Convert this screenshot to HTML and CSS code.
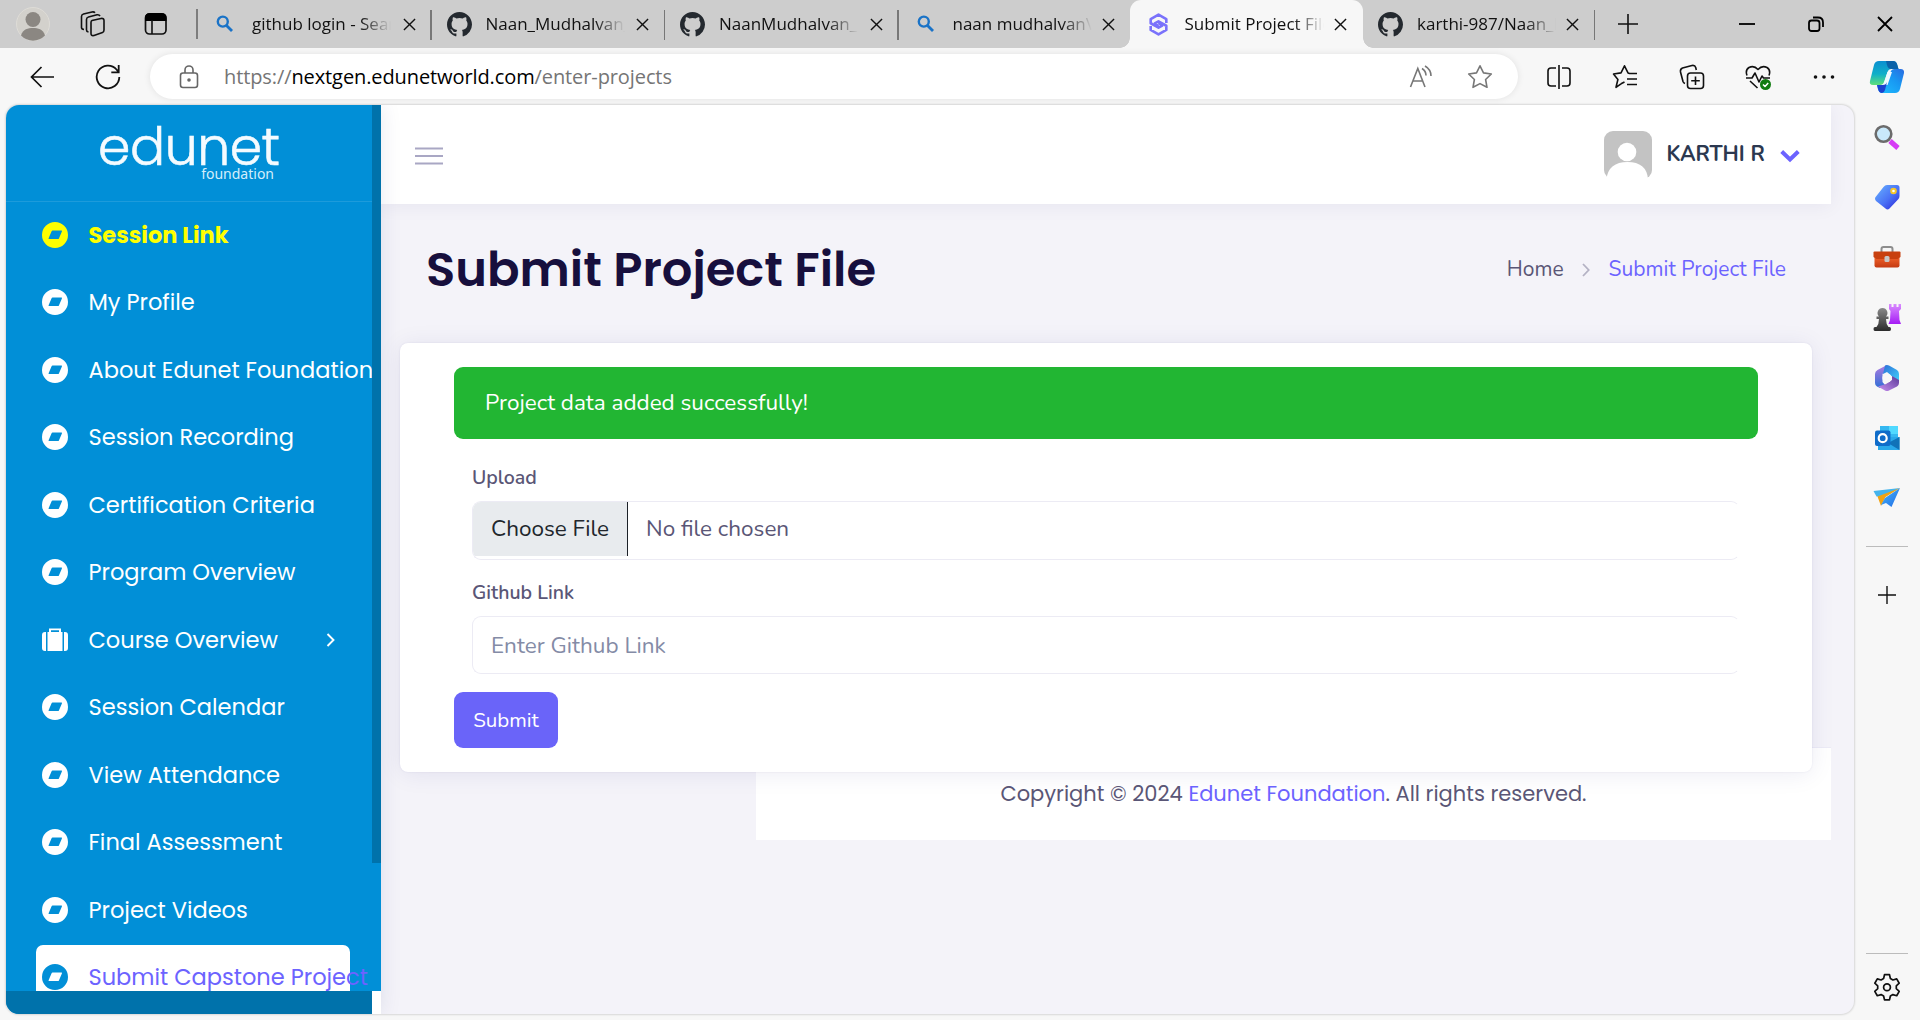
FILE: index.html
```html
<!DOCTYPE html>
<html lang="en">
<head>
<meta charset="utf-8">
<title>Submit Project File</title>
<link rel="stylesheet" href="styles.css">
</head>
<body>
<svg width="0" height="0" class="defs">
  <defs>
    <linearGradient id="copA" x1="0" y1="0" x2="0" y2="1"><stop offset="0" stop-color="#0a8fd0"/><stop offset=".55" stop-color="#10b0c8"/><stop offset="1" stop-color="#5fe07a"/></linearGradient>
    <linearGradient id="copB" x1="0" y1="1" x2="1" y2="0"><stop offset="0" stop-color="#1fc0ff"/><stop offset=".6" stop-color="#1897f2"/><stop offset="1" stop-color="#2a6be0"/></linearGradient>
    <linearGradient id="tag" x1="0" y1="0" x2="1" y2="1"><stop offset="0" stop-color="#69b4ff"/><stop offset=".55" stop-color="#4a72f5"/><stop offset="1" stop-color="#2a22d8"/></linearGradient>
    <linearGradient id="box" x1="0" y1="0" x2="0" y2="1"><stop offset="0" stop-color="#f0622a"/><stop offset="1" stop-color="#c43a12"/></linearGradient>
    <linearGradient id="pawn" x1="0" y1="0" x2="0" y2="1"><stop offset="0" stop-color="#8a8a8a"/><stop offset="1" stop-color="#2b2b2b"/></linearGradient>
    <linearGradient id="rook" x1="0" y1="0" x2="0" y2="1"><stop offset="0" stop-color="#d98cff"/><stop offset="1" stop-color="#a51cf5"/></linearGradient>
    <linearGradient id="hexA" x1="0" y1="0" x2="0" y2="1"><stop offset="0" stop-color="#b07be0"/><stop offset="1" stop-color="#2f6fd6"/></linearGradient>
    <linearGradient id="hexB" x1="0" y1="0" x2="1" y2="1"><stop offset="0" stop-color="#2c6fd8"/><stop offset="1" stop-color="#3fd0fa"/></linearGradient>
    <linearGradient id="hexC" x1="0" y1="1" x2="1" y2="0"><stop offset="0" stop-color="#c890f0"/><stop offset="1" stop-color="#5b3a98"/></linearGradient>
    <linearGradient id="plane" x1="0" y1="0" x2="1" y2="1"><stop offset="0" stop-color="#4ab8f5"/><stop offset="1" stop-color="#1f6be8"/></linearGradient>
  </defs>
  <symbol id="x" viewBox="0 0 14 14"><path d="M1 1l12 12M13 1L1 13" fill="none" stroke="currentColor" stroke-width="1.5"/></symbol>
  <symbol id="search" viewBox="0 0 18 18"><circle cx="6.8" cy="6.6" r="5" fill="none" stroke="#1a73c7" stroke-width="2.4"/><path d="M10.5 10.5l5.5 5.5" stroke="#1a73c7" stroke-width="2.8"/></symbol>
  <symbol id="gh" viewBox="0 0 16 16"><path fill="#24292f" d="M8 0C3.58 0 0 3.58 0 8c0 3.54 2.29 6.53 5.47 7.59.4.07.55-.17.55-.38 0-.19-.01-.82-.01-1.49-2.01.37-2.53-.49-2.69-.94-.09-.23-.48-.94-.82-1.13-.28-.15-.68-.52-.01-.53.63-.01 1.08.58 1.23.82.72 1.21 1.87.87 2.33.66.07-.52.28-.87.51-1.07-1.78-.2-3.64-.89-3.64-3.95 0-.87.31-1.59.82-2.15-.08-.2-.36-1.02.08-2.12 0 0 .67-.21 2.2.82a7.6 7.6 0 0 1 4 0c1.53-1.04 2.2-.82 2.2-.82.44 1.1.16 1.92.08 2.12.51.56.82 1.27.82 2.15 0 3.07-1.87 3.75-3.65 3.95.29.25.54.73.54 1.48 0 1.07-.01 1.93-.01 2.2 0 .21.15.46.55.38A8.01 8.01 0 0 0 16 8c0-4.42-3.58-8-8-8z"/></symbol>
  <symbol id="disc" viewBox="0 0 26 26"><path fill="currentColor" fill-rule="evenodd" d="M13 0a13 13 0 1 0 0 26a13 13 0 0 0 0-26zM10.500 8.600h9c.5 0 .6.3.4.8l-3 7c-.2.4-.5.600-.9.600H7c-.5 0-.6-.3-.4-.8l3-7c.2-.4.5-.6.9-.6z"/></symbol>
</svg>

<div class="browser">
  <header class="tabs">
    <div class="tools">
      <svg class="avatar" width="34" height="34" viewBox="0 0 34 34"><circle cx="17" cy="17" r="16.5" fill="#d3d1cc" stroke="#dedcd7"/><circle cx="17" cy="12.5" r="7.5" fill="#8b8782"/><path d="M5 28.5C7 22 12 21 17 21s10 1 12 7.5A16.500 16.500 0 0 1 5 28.500z" fill="#8b8782"/></svg>
      <svg width="26" height="26" viewBox="0 0 26 26" fill="none" stroke="#111" stroke-width="1.6" stroke-linejoin="round"><path d="M12 9.500L21 7.500q3-.5 3 2V19q0 2-1.500 2.500l-8.500 3q-3 .7-3-2V11.500q0-1.700 1-2z"/><path d="M8.500 21q-2-.3-2-2V8.500q0-2 2-2.500l8.500-2.200q2.200-.3 3 1.200"/><path d="M4 18.500q-2.500-.3-2.500-2V5.500q0-2 2-2.500L12 1q2-.4 3 .8"/></svg>
      <svg width="24" height="24" viewBox="0 0 24 24"><rect x="1.500" y="2" width="20.500" height="20" rx="4" fill="none" stroke="#111" stroke-width="1.700"/><path d="M1 9V6q0-5 5-5h11.500q5 0 5 5v3z" fill="#000"/><path d="M8 8v14" stroke="#111" stroke-width="1.600"/></svg>
    </div>
    <div class="tab sep"><svg class="fav small"><use href="#search"/></svg><span class="label">github login - Search</span><svg class="close"><use href="#x"/></svg></div>
    <div class="tab sep"><svg class="fav"><use href="#gh"/></svg><span class="label">Naan_Mudhalvan_</span><svg class="close"><use href="#x"/></svg></div>
    <div class="tab sep"><svg class="fav"><use href="#gh"/></svg><span class="label">NaanMudhalvan_P</span><svg class="close"><use href="#x"/></svg></div>
    <div class="tab sep"><svg class="fav small"><use href="#search"/></svg><span class="label">naan mudhalvan\W</span><svg class="close"><use href="#x"/></svg></div>
    <div class="tab active"><svg class="fav" viewBox="0 0 24 24" fill="none" stroke="#7a72fb" stroke-width="2.500" stroke-linejoin="round"><path d="M19.500 10.500V6.800L12 2.500 4.500 6.800v4L12 15l3.600-2L12 10.500"/><path d="M4.500 13.500v3.700L12 21.500l7.500-4.300v-4L12 9 8.400 11l3.600 2.500"/></svg><span class="label">Submit Project File</span><svg class="close"><use href="#x"/></svg></div>
    <div class="tab last"><svg class="fav"><use href="#gh"/></svg><span class="label">karthi-987/Naan_M</span><svg class="close"><use href="#x"/></svg></div>
    <svg class="newtab" width="22" height="22" viewBox="0 0 22 22" stroke="#111" stroke-width="1.600"><path d="M1 11h20M11 1v20"/></svg>
    <div class="window">
      <svg width="16" height="16" viewBox="0 0 16 16" stroke="#000" stroke-width="1.800"><path d="M0 8h16"/></svg>
      <svg width="16" height="16" viewBox="0 0 16 16" fill="none" stroke="#000" stroke-width="1.800"><rect x="1" y="4.500" width="10.500" height="10.500" rx="2.500"/><path d="M5 1.500h5q5 0 5 5V11"/></svg>
      <svg width="16" height="16" viewBox="0 0 16 16" stroke="#000" stroke-width="1.800"><path d="M1 1l14 14M15 1L1 15"/></svg>
    </div>
  </header>

  <div class="toolbar">
    <svg class="back" width="24" height="22" viewBox="0 0 24 22" fill="none" stroke="#111" stroke-width="1.700"><path d="M24 11H1.500M11.500 1L1.500 11l10 10"/></svg>
    <svg class="reload" width="26" height="26" viewBox="0 0 26 26" fill="none" stroke="#111" stroke-width="1.800"><path d="M24.300 13A11.300 11.300 0 1 1 21.500 5.500L23.500 8M23.700 1v7.300h-7.400"/></svg>
    <div class="address">
      <svg width="20" height="24" viewBox="0 0 20 24" fill="none" stroke="#666" stroke-width="1.600"><rect x="1.500" y="8" width="17" height="14.500" rx="2.500"/><path d="M6 8V5a4 4 0 0 1 8 0v3"/><circle cx="10" cy="15" r="1" fill="#666"/></svg>
      <span class="url">https://<b>nextgen.edunetworld.com</b>/enter-projects</span>
      <svg width="24" height="24" viewBox="0 0 24 24" fill="none" stroke="#777" stroke-width="1.600"><path d="M1.500 22L8.800 3.500 16 22M4 16h9.500M13 3.500q4 2.500 4 7M16 1q6 3.500 6 10"/></svg>
      <svg width="26" height="26" viewBox="0 0 26 26" fill="none" stroke="#777" stroke-width="1.600" stroke-linejoin="round"><path d="M13 1.800l3.500 7.100 7.800 1.100-5.700 5.500 1.400 7.800-7-3.700-7 3.700 1.400-7.800L1.700 10l7.800-1.100z"/></svg>
    </div>
    <div class="actions">
      <svg viewBox="0 0 26 26"><path d="M10 4H5Q2 4 2 7v12q0 3 3 3h5M16 4h5q3 0 3 3v12q0 3-3 3h-5M13 1v24"/></svg>
      <svg viewBox="0 0 26 26"><path d="M9 19.800l-5 3.500 1.900-7.800L1.500 10 9 8.900l3.500-7.100L16 8.900l1.500.6M12.500 18L9 19.800M17 9.500h8M15 15h10M15 20.500h10"/></svg>
      <svg viewBox="0 0 26 26"><rect x="8.500" y="9" width="16" height="15.500" rx="3"/><path d="M16.500 12.500v8.500M12.200 16.700h8.600M6 19.500q-1.500-.5-2-2L1.500 8Q1 5 3.500 4L13 1.500q3-.5 3.700 2l.6 2.500"/></svg>
      <svg viewBox="0 0 26 26"><path d="M2 11.500Q0 6 4 3.500 9 1 13 5.500 17 1 22 3.500 26 6 24 11.500M1 14h6l3-5 4 9 3-6 1.500 2H25M5 17l7.500 7"/><circle cx="20.500" cy="20.500" r="5.500" fill="#107c10" stroke="none"/><path d="M18 20.500l2 2 3.200-3.600" stroke="#fff" stroke-width="1.500"/></svg>
      <svg viewBox="0 0 26 26"><g fill="#111" stroke="none"><circle cx="4.500" cy="13" r="1.800"/><circle cx="13" cy="13" r="1.800"/><circle cx="21.500" cy="13" r="1.800"/></g></svg>
    </div>
    <svg class="copilot" width="36" height="34" viewBox="0 0 36 34"><path d="M10 1h14q3 0 4 3l1.500 5h-7q-3 0-4 3l-3.500 10q-1 3-4 3H4q-4 0-3-4L5 5q1-4 5-4z" fill="url(#copA)"/><path d="M17 1h7q3 0 4 3l1.500 5H22q-3 0-4-4z" fill="#0b62a8"/><path d="M26 33H13q-3 0-4-4l-1-4h6q3 0 4-3l3.500-10q1-3 4-3h6q4 0 3.500 4l-4 16q-1 4-5 4z" fill="url(#copB)"/><path d="M18.500 12h4.500l-4.500 13h-4z" fill="#eefaff"/><path d="M8 25h6q3 0 4-3l-2 8q-1 3-3 3-3 0-4-4z" fill="#1b43cf"/></svg>
  </div>

  <div class="below">
    <div class="page">
      <aside class="sidebar">
        <div class="nav-scroll">
          <div class="brand"><div class="logo"><span class="logo-main">edunet</span><span class="logo-sub">foundation</span></div></div>
          <nav>
            <a class="item hot"><svg><use href="#disc"/></svg><span>Session Link</span></a>
            <a class="item"><svg><use href="#disc"/></svg><span>My Profile</span></a>
            <a class="item"><svg><use href="#disc"/></svg><span>About Edunet Foundation</span></a>
            <a class="item"><svg><use href="#disc"/></svg><span>Session Recording</span></a>
            <a class="item"><svg><use href="#disc"/></svg><span>Certification Criteria</span></a>
            <a class="item"><svg><use href="#disc"/></svg><span>Program Overview</span></a>
            <a class="item"><svg viewBox="0 0 26 26" fill="currentColor"><path d="M3.500 5H4v19H3q-3 0-3-3V8q0-3 3-3zM22 5h1q3 0 3 3v13q0 3-3 3h-1z"/><path fill-rule="evenodd" d="M7 1.500h12V5h1.500v19h-15V5H7zM9 3.300V5h8V3.300z"/></svg><span>Course Overview</span><svg class="caret" viewBox="0 0 10 14"><path d="M1.500 1l6 6-6 6" fill="none" stroke="#fff" stroke-width="1.900"/></svg></a>
            <a class="item"><svg><use href="#disc"/></svg><span>Session Calendar</span></a>
            <a class="item"><svg><use href="#disc"/></svg><span>View Attendance</span></a>
            <a class="item"><svg><use href="#disc"/></svg><span>Final Assessment</span></a>
            <a class="item"><svg><use href="#disc"/></svg><span>Project Videos</span></a>
            <a class="item current"><svg><use href="#disc"/></svg><span>Submit Capstone Project</span></a>
          </nav>
        </div>
        <div class="vbar"><div class="vthumb"></div></div>
        <div class="hbar"></div>
        <div class="corner"></div>
      </aside>

      <main class="main">
        <div class="topbar">
          <svg class="burger" width="28" height="18" viewBox="0 0 28 18" stroke="#a9a7c4" stroke-width="2.200"><path d="M0 1.500h28M0 9h28M0 16.500h28"/></svg>
          <div class="user">
            <svg width="48" height="48" viewBox="0 0 48 48"><rect width="48" height="48" rx="9" fill="#c3c3c3"/><circle cx="23" cy="21" r="9.300" fill="#fff"/><path d="M2.500 48q2-17 21-17t20.500 17z" fill="#fff"/></svg>
            <span class="name">KARTHI R</span>
            <svg width="20" height="14" viewBox="0 0 20 14" fill="none" stroke="#6c63ff" stroke-width="4"><path d="M1.700 2.500l8.300 8 8.300-8"/></svg>
          </div>
        </div>
        <div class="heading">
          <h1>Submit Project File</h1>
          <div class="crumbs"><span class="home">Home</span><svg width="8" height="14" viewBox="0 0 8 14" fill="none" stroke="#b4b2c4" stroke-width="1.800"><path d="M1 1l5.700 6L1 13"/></svg><span class="here">Submit Project File</span></div>
        </div>
        <section class="card">
          <div class="alert">Project data added successfully!</div>
          <div class="fields">
            <label class="upload-label">Upload</label>
            <div class="file"><span class="choose">Choose File</span><span class="none">No file chosen</span></div>
            <label class="link-label">Github Link</label>
            <div class="input">Enter Github Link</div>
          </div>
          <button class="submit">Submit</button>
        </section>
        <footer class="footer"><p>Copyright © 2024 <a>Edunet Foundation</a>. All rights reserved.</p></footer>
      </main>
    </div>

    <div class="rail">
      <svg viewBox="0 0 28 28"><path d="M17 18l8 7" stroke="#d63bf5" stroke-width="5"/><circle cx="10.500" cy="11" r="7.800" fill="#c9e9fb" stroke="#6b6b6b" stroke-width="2.600"/></svg>
      <svg viewBox="0 0 28 28"><path d="M14 2h10q2.500 0 2.500 2.500V13q0 2-1.500 3.500l-8.500 9q-2 2-4 0L3 18q-2-2.500 0-4.500L10.500 4Q12 2 14 2z" fill="url(#tag)"/><circle cx="20.500" cy="8" r="2.300" fill="#fff" stroke="#f5c52c" stroke-width="2"/></svg>
      <svg viewBox="0 0 28 28"><path d="M8.500 9V6q0-2 2-2h7q2 0 2 2v3" fill="none" stroke="#8d8d8d" stroke-width="2"/><path d="M1.500 14h25v8.500q0 2-2 2h-21q-2 0-2-2z" fill="url(#box)"/><path d="M.5 9.500q0-1 1-1h25q1 0 1 1V14l-3 2h-21l-3-2z" fill="#c8400f"/><rect x="11.500" y="13" width="5" height="6" rx="1.500" fill="#c6c6c6"/></svg>
      <svg viewBox="0 0 28 28"><path d="M16 0h2.500v3h2V0h3v3h2V0H28v5l-2 2 .5 9 1.500 4H15.500l1.500-4 .5-9-1.500-2z" fill="url(#rook)"/><path d="M9.500 4a5 5 0 0 1 3.500 8.500h2.500V15H13q0 5 2.500 8h1q1.500 0 1.500 2t-1.500 2H2q-1.500 0-1.500-2T2 23h1.500Q6 20 6 15H3.500v-2.500H6A5 5 0 0 1 9.500 4z" fill="url(#pawn)"/></svg>
      <svg viewBox="0 0 28 28"><path d="M14 1L4.500 6Q2 7.500 2 10v9q0 2.500 2 3.500l3 1.500 5-3-2.500-3v-8L14 7z" fill="url(#hexA)"/><path d="M12 1.500q2-1 4 0l8 4.500q2 1.500 2 4v7L18.500 12 14 8l-4 2z" fill="url(#hexB)"/><path d="M26 16v3q0 2-2 3.500l-8 4q-2 1-4 0L5 22.500 13 20l6-4V12z" fill="url(#hexC)"/><circle cx="14" cy="14" r="4.600" fill="#f7f7f7"/></svg>
      <svg viewBox="0 0 28 28"><path d="M7 2h18v12H7z" fill="#35b8f1"/><path d="M16 2h9v8h-9z" fill="#50d9ff"/><path d="M5 13h21.500v13H5z" fill="#28a8ea"/><path d="M26.500 13v13L15 19z" fill="#1072b8"/><rect x="2" y="6.500" width="15.500" height="15.500" rx="2" fill="#0f6cc9"/><circle cx="9.700" cy="14.200" r="4" fill="none" stroke="#fff" stroke-width="2.200"/></svg>
      <svg viewBox="0 0 28 28"><path d="M.5 7L27 4 10 13 3.500 12.500z" fill="#45b4ec"/><path d="M27 4L4.500 12.500 8 22l4.500-9z" fill="#f1a312"/><path d="M27 4L12 14l-4 7 5-2 5.500 4z" fill="url(#plane)"/></svg>
      <hr class="upper">
      <svg class="add" viewBox="0 0 20 20" stroke="#111" stroke-width="1.400"><path d="M1 10h18M10 1v18"/></svg>
      <hr class="lower">
      <svg class="gear" viewBox="0 0 28 28" fill="none" stroke="#111" stroke-width="1.700" stroke-linejoin="round"><path d="M11.500 1.700h5l.9 3.900 2.500 1.400 3.800-1.100 2.500 4.300-2.900 2.700v2.800l2.900 2.700-2.500 4.300-3.800-1.100-2.500 1.400-.9 3.800h-5l-.9-3.800-2.500-1.400-3.800 1.100-2.500-4.300 2.900-2.700v-2.800l-2.900-2.700 2.500-4.300 3.800 1.100 2.500-1.400z"/><circle cx="14" cy="14.300" r="3.400"/></svg>
    </div>
  </div>
</div>
</body>
</html>
```
FILE: styles.css
```css
* { box-sizing: border-box; }
body { margin: 0; overflow: hidden; }
.defs { position: absolute; }
svg { display: block; flex: none; }

.browser { width: 1920px; height: 1020px; display: flex; flex-direction: column; background: #f7f7f7; font-family: "Segoe UI", "Open Sans", sans-serif; }

/* tab strip */
.tabs { height: 48px; flex: none; display: flex; align-items: center; background: #cdcdcd; }
.tools { width: 198px; padding-left: 16px; display: flex; align-items: center; border-right: 2px solid #7d7d7d; height: 30px; }
.tools svg:nth-child(2) { margin-left: 30px; }
.tools svg:nth-child(3) { margin-left: 38px; }
.tab { width: 233.500px; height: 48px; display: flex; align-items: center; padding: 0 16px 0 15px; position: relative; color: #111; }
.tab.sep::after { content: ""; position: absolute; right: 0; top: 10px; width: 1.500px; height: 30px; background: #777; }
.tab:nth-child(5) { width: 231px; padding-right: 15px; }
.tab:nth-child(5)::after { display: none; }
.fav { width: 25px; height: 25px; }
.fav.small { width: 18px; height: 18px; margin: 0 4px 0 3px; }
.label { width: 139px; margin-left: 14px; margin-top: -1px; font-size: 17px; white-space: nowrap; overflow: hidden; -webkit-mask-image: linear-gradient(90deg, #000 78%, transparent); mask-image: linear-gradient(90deg, #000 78%, transparent); }
.close { width: 13px; height: 13px; margin-left: auto; }
.tab.active { height: 48px; padding-left: 16px; background: #f7f7f7; border-radius: 11px 11px 0 0; }
.tab.active::before, .tab.active::after { content: ""; position: absolute; bottom: 0; width: 10px; height: 10px; }
.tab.active::before { left: -10px; background: radial-gradient(circle at 0 0, #cdcdcd 9.500px, #f7f7f7 10px); }
.tab.active::after { right: -10px; background: radial-gradient(circle at 100% 0, #cdcdcd 9.500px, #f7f7f7 10px); }
.tab.last { width: 232px; border: 0; }
.tab.last::after { content: ""; position: absolute; right: 0; top: 10px; width: 1.500px; height: 30px; background: #777; }
.newtab { margin-left: 22px; }
.window { margin-left: auto; padding-right: 27px; display: flex; gap: 53px; }

/* toolbar */
.toolbar { height: 57px; flex: none; display: flex; align-items: center; padding: 0 15px 0 30px; }
.reload { margin-left: 41px; }
.address { width: 1368px; height: 45px; margin-left: 29px; display: flex; align-items: center; padding: 0 25px 0 29px; border-radius: 23px; background: #fff; box-shadow: 0 0 7px rgba(0,0,0,.09); }
.url { margin: 0 auto 0 25px; font-size: 20px; letter-spacing: -.1px; color: #757575; }
.url b { font-weight: 400; color: #000; }
.address svg + svg { margin-left: 34px; }
.actions { margin-left: 28px; display: flex; gap: 40.300px; }
.actions svg { width: 26px; height: 26px; fill: none; stroke: #111; stroke-width: 1.600; stroke-linejoin: round; }
.copilot { margin-left: auto; }

.below { flex: 1; display: flex; min-height: 0; }
.page { width: 1848px; height: 909px; margin-left: 6px; display: flex; overflow: hidden; border-radius: 13px; background: #f4f3f9; box-shadow: 0 0 2px 1px rgba(0,0,0,.13); }

/* course navigation */
.sidebar { width: 375px; flex: none; display: grid; grid-template: 886px 23px / 366px 9px; background: #018fd7; z-index: 1; box-shadow: 0 0 20px rgba(1,41,112,.1); }
.nav-scroll { height: 886px; overflow: hidden; width: 375px; font-family: "Poppins", "Inter", sans-serif; grid-column: 1 / 3; grid-row: 1; }
.brand { width: 366px; height: 97px; border-bottom: 1px solid #1d9bdb; padding: 14px 0 0 92px; }
.logo { width: 182px; display: flex; flex-direction: column; color: #f4fbff; }
.logo-main { font-size: 52px; font-weight: 300; line-height: 55px; letter-spacing: -.4px; -webkit-text-stroke: .6px; }
.logo-sub { align-self: flex-end; margin-right: 6px; margin-top: -9px; font: 14px/18px "Noto Sans", sans-serif; color: #d4eefb; }
.item { position: relative; display: flex; align-items: center; width: 314px; height: 64px; margin: 0 0 3.500px 30px; padding: 1.500px 0 0 6px; border-radius: 7px; color: #fff; font-size: 22.500px; white-space: nowrap; }
.item svg { width: 26px; height: 26px; margin-right: 20.500px; }
.item .caret { width: 10px; height: 14px; margin: 1px 14px 0 auto; }
.hot { color: #ff0; font-weight: 700; }
.current { background: #fff; color: #6c63ff; }
.current svg { color: #018fd7; }
.vbar { grid-column: 2; grid-row: 1; z-index: 1; }
.vthumb { height: 758px; background: #0072ab; }
.hbar { background: #0072ab; }
.corner { background: #fff; }

/* content */
.main { width: 1450px; height: 909px; display: flex; flex-direction: column; font-family: "Nunito", "Lato", sans-serif; color: #5a5676; }
.topbar { height: 99px; flex: none; display: flex; align-items: center; justify-content: space-between; padding: 1px 31px 0 34px; background: #fff; box-shadow: 0 2px 18px rgba(1,0,90,.06); }
.burger { margin-top: 2px; }
.user { display: flex; align-items: center; }
.name { margin: -2px 0 0 15px; width: 113.500px; font-size: 21px; font-weight: 700; color: #2b3850; }
.user svg:last-child { margin-top: 2px; }
.heading { height: 139px; flex: none; display: flex; justify-content: space-between; align-items: center; padding: 0 45px 10px 45px; }
h1 { margin: 2px 0 0; font: 600 48px/60px "Poppins", "Inter", sans-serif; color: #170f3d; }
.crumbs { display: flex; align-items: center; font-size: 21px; }
.crumbs svg { margin: 2px 19px 0 18px; }
.here { color: #6c63ff; }
.card { width: 1412px; height: 429px; flex: none; margin-left: 19px; padding: 24px 54px; border-radius: 8px; background: #fff; box-shadow: 0 2px 24px rgba(20,10,110,.08), 0 0 2px rgba(20,10,110,.09); z-index: 1; }
.alert { width: 1304px; height: 72px; padding-left: 31px; border-radius: 9px; background: #22b633; color: #fff; font-size: 22.500px; line-height: 71px; }
.fields { width: 1268px; margin-left: 18px; display: flex; flex-direction: column; }
label { font-size: 19.500px; font-weight: 600; line-height: 26px; }
.upload-label { margin-top: 26px; }
.file, .input { border: 1px solid #ecebf4; border-right-color: #fff; border-radius: 9px; font-size: 22.500px; }
.file { display: flex; align-items: flex-start; height: 59px; margin-top: 10px; overflow: hidden; }
.choose { width: 155px; height: 54px; padding-left: 18px; border-right: 1px solid #1c2128; background: #e8ebee; color: #21262c; line-height: 53px; }
.none { margin-left: 18px; line-height: 53px; }
.link-label { margin-top: 20px; }
.input { height: 58px; margin-top: 10px; padding-left: 18px; line-height: 58px; color: #848ba6; }
.submit { display: block; width: 104px; height: 56px; margin-top: 18px; padding: 0 0 1px; border: 0; border-radius: 9px; background: #6a64f9; color: #fff; font: 20.500px "Nunito", "Lato", sans-serif; }
.footer { width: 1075px; height: 93px; flex: none; margin: -25px 0 0 auto; padding-top: 30px; border-top: 1px solid #ecebf6; background: #fff; text-align: center; }
.footer p { margin: 0; font: 21px/32px "Poppins", "Inter", sans-serif; position: relative; z-index: 2; }
.footer a { color: #6c63ff; }

/* edge bar */
.rail { width: 66px; display: flex; flex-direction: column; align-items: center; padding: 18px 0 0 0; gap: 32.200px; }
.rail svg { width: 28px; height: 28px; }
.rail hr { width: 42px; height: 1px; margin: 0; border: 0; background: #bcbcbc; flex: none; }
.rail .upper { margin-top: 1.600px; }
.rail .add { width: 20px; height: 20px; margin-top: 5.500px; }
.rail .lower { margin-top: auto; }
.rail .gear { margin: -13px 0 19px; }
```
